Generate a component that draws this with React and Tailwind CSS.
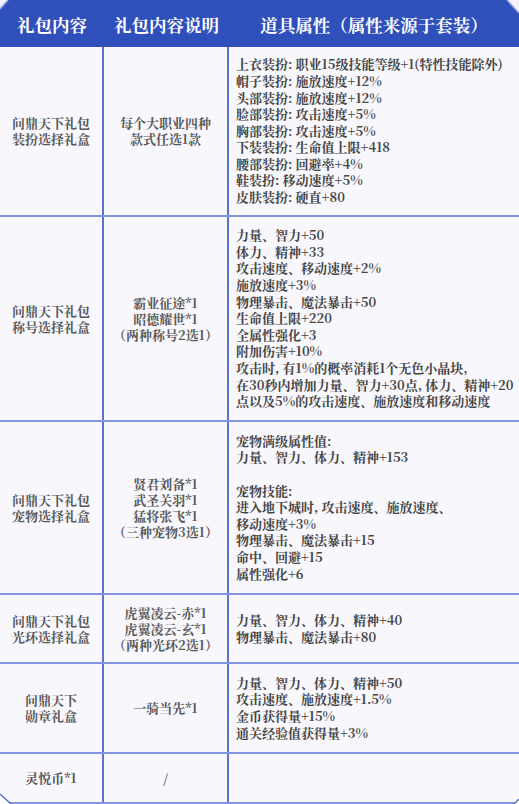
import React from "react";

const FONT = {
  fontFamily: '"Noto Serif CJK SC", "Liberation Serif", "Noto Sans CJK SC", serif',
};

const rows = [
  {
    h: "h-[170px]",
    a: ["问鼎天下礼包", "装扮选择礼盒"],
    b: ["每个大职业四种", "款式任选1款"],
    c: [
      "上衣装扮: 职业15级技能等级+1(特性技能除外)",
      "帽子装扮: 施放速度+12%",
      "头部装扮: 施放速度+12%",
      "脸部装扮: 攻击速度+5%",
      "胸部装扮: 攻击速度+5%",
      "下装装扮: 生命值上限+418",
      "腰部装扮: 回避率+4%",
      "鞋装扮: 移动速度+5%",
      "皮肤装扮: 硬直+80",
    ],
  },
  {
    h: "h-[205px]",
    a: ["问鼎天下礼包", "称号选择礼盒"],
    b: ["霸业征途*1", "昭德耀世*1", "（两种称号2选1）"],
    c: [
      "力量、智力+50",
      "体力、精神+33",
      "攻击速度、移动速度+2%",
      "施放速度+3%",
      "物理暴击、魔法暴击+50",
      "生命值上限+220",
      "全属性强化+3",
      "附加伤害+10%",
      "攻击时, 有1%的概率消耗1个无色小晶块,",
      "在30秒内增加力量、智力+30点, 体力、精神+20",
      "点以及5%的攻击速度、施放速度和移动速度",
    ],
  },
  {
    h: "h-[173px]",
    a: ["问鼎天下礼包", "宠物选择礼盒"],
    b: ["贤君刘备*1", "武圣关羽*1", "猛将张飞*1", "（三种宠物3选1）"],
    c: [
      "宠物满级属性值:",
      "力量、智力、体力、精神+153",
      "",
      "宠物技能:",
      "进入地下城时, 攻击速度、施放速度、",
      "移动速度+3%",
      "物理暴击、魔法暴击+15",
      "命中、回避+15",
      "属性强化+6",
    ],
  },
  {
    h: "h-[69px]",
    a: ["问鼎天下礼包", "光环选择礼盒"],
    b: ["虎翼凌云-赤*1", "虎翼凌云-玄*1", "（两种光环2选1）"],
    c: ["力量、智力、体力、精神+40", "物理暴击、魔法暴击+80"],
  },
  {
    h: "h-[90px]",
    a: ["问鼎天下", "勋章礼盒"],
    b: ["一骑当先*1"],
    c: [
      "力量、智力、体力、精神+50",
      "攻击速度、施放速度+1.5%",
      "金币获得量+15%",
      "通关经验值获得量+3%",
    ],
  },
  {
    h: "h-[50px]",
    a: ["灵悦币*1"],
    b: ["/"],
    c: [],
  },
];

function Lines({ items, className }) {
  return (
    <div className={className}>
      {items.map((t, i) => (
        <div key={i} className="whitespace-nowrap">
          {t || "\u00a0"}
        </div>
      ))}
    </div>
  );
}

export default function App() {
  return (
    <div
      className="relative w-[519px] h-[804px] overflow-hidden bg-[#f7f7fc]"
      style={FONT}
    >
      <div className="flex h-[47px] bg-[#2f4fba] text-white font-bold text-[17.5px] items-center pt-[3px]">
        <div className="w-[104px] text-center">礼包内容</div>
        <div className="w-[125px] text-center">礼包内容说明</div>
        <div className="flex-1 text-center">道具属性（属性来源于套装）</div>
      </div>

      {rows.map((r, i) => (
        <div key={i} className={`flex ${r.h} border-b-2 border-[#8395dc]`}>
          <div className="w-[104px] shrink-0 border-r-2 border-[#5a72d3] flex items-center justify-center">
            <Lines
              items={r.a}
              className="text-center text-[13px] leading-[16px] font-bold text-[#585858]"
            />
          </div>
          <div className="w-[125px] shrink-0 border-r-2 border-[#5a72d3] flex items-center justify-center">
            <Lines
              items={r.b}
              className="text-center text-[13px] leading-[16px] font-bold text-[#585858]"
            />
          </div>
          <div className="flex-1 flex items-center pl-[7px]">
            <Lines
              items={r.c}
              className="text-left text-[13px] leading-[16.6px] font-bold text-[#454545]"
            />
          </div>
        </div>
      ))}

      <svg
        className="absolute inset-0 pointer-events-none"
        width="519"
        height="804"
        viewBox="0 0 519 804"
      >
        <polygon points="0,0 8,0 0,9" fill="#f3f3f9" />
        <line x1="8" y1="0" x2="0" y2="9" stroke="#9aa8e6" strokeWidth="1.5" />
        <polygon points="507,0 519,0 519,13" fill="#f3f3f9" />
        <line x1="507" y1="0" x2="519" y2="13" stroke="#9aa8e6" strokeWidth="1.5" />
        <polygon points="0,794 0,804 11,804" fill="#ffffff" />
        <line x1="0" y1="794" x2="11" y2="804" stroke="#5a72d3" strokeWidth="1.5" />
        <polygon points="519,799 519,804 514,804" fill="#ffffff" />
        <line x1="519" y1="799" x2="514" y2="804" stroke="#5a72d3" strokeWidth="1.5" />
      </svg>
    </div>
  );
}
